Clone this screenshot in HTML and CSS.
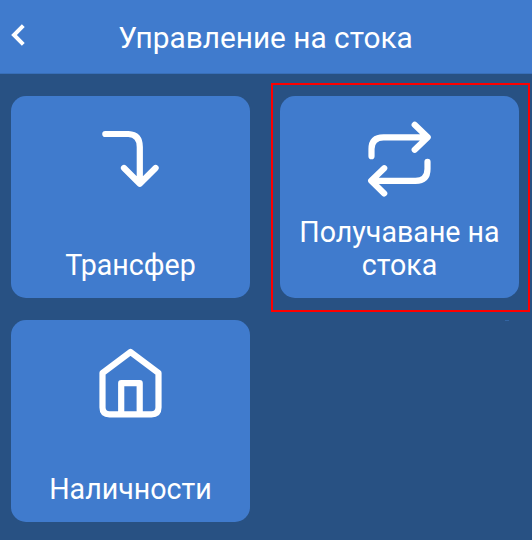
FILE: index.html
```html
<!DOCTYPE html>
<html lang="bg">
<head>
<meta charset="utf-8">
<title>Управление на стока</title>
<link rel="stylesheet" href="styles.css">
</head>
<body>
<header class="bar">
  <svg class="back" viewBox="0 0 14 24" width="14" height="24"><path d="M12.3 2.600 3 12l9.300 9.400"/></svg>
  <h1 class="title">Управление на стока</h1>
</header>
<main class="grid">
  <div class="card">
    <svg class="icon" viewBox="81 110 100 100" width="100" height="100"><path d="M105.300 134H128.500Q139.800 134.500 139.800 147V183.500M124 168l15.800 15.800L155.600 168"/></svg>
    <span class="label">Трансфер</span>
  </div>
  <div class="card selected">
    <svg class="icon" viewBox="350 110 100 100" width="100" height="100"><path d="M371.500 156.200V149Q371.500 137.300 383.500 137.300H427.500M414.700 124.800l13 12.500-13 12.500M427.500 161.800V169Q427.500 180.800 415.500 180.800H371.500M384.200 168.200l-13 12.600 13 12.600"/></svg>
    <span class="label">Получаване на стока</span>
  </div>
  <div class="card">
    <svg class="icon" viewBox="81 334 100 100" width="100" height="100"><path d="M130.500 352 158.500 373V407.500Q158.500 414.300 151.500 414.300H109.500Q102.500 414.300 102.500 407.500V373ZM121.200 414V383.200H139.700V414"/></svg>
    <span class="label">Наличности</span>
  </div>
  <div class="slot"></div>
</main>
</body>
</html>
```
FILE: styles.css
```css
* { box-sizing: border-box; }
body {
  margin: 0;
  height: 540px;
  overflow: hidden;
  background: #285183;
  color: #fff;
  font-family: Roboto, "Noto Sans", sans-serif;
}
svg {
  display: block;
  fill: none;
  stroke: #fff;
}
.bar {
  display: flex;
  align-items: center;
  height: 74px;
  padding: 2px 0 0 11px;
  background: #407bcd;
  border-bottom: 1px solid #386fb9;
}
.back {
  flex: none;
  margin-top: -5px;
  stroke-width: 4;
}
.title {
  flex: 1;
  margin: 0;
  padding-right: 26px;
  text-align: center;
  font-size: 29.8px;
  font-weight: 400;
  line-height: 36px;
}
.grid {
  display: grid;
  grid-template-columns: 239px 239px;
  grid-auto-rows: 202px;
  gap: 22px 30px;
  padding: 22px 0 0 11px;
}
.card {
  position: relative;
  display: flex;
  flex-direction: column;
  align-items: center;
  justify-content: space-between;
  padding: 14px 15px 16px;
  border-radius: 15px;
  background: #407bcd;
}
.icon {
  flex: none;
  stroke-width: 6.200;
  stroke-linecap: round;
  stroke-linejoin: round;
}
.label {
  text-align: center;
  font-size: 28.600px;
  line-height: 33px;
}
.selected::after {
  content: "";
  position: absolute;
  inset: -13px -11px -14px -9px;
  border: 2px solid #f00;
}
.slot {
  justify-self: end;
  width: 4px;
  height: 1px;
  margin-right: 10px;
  background: #3365a4;
}
```
